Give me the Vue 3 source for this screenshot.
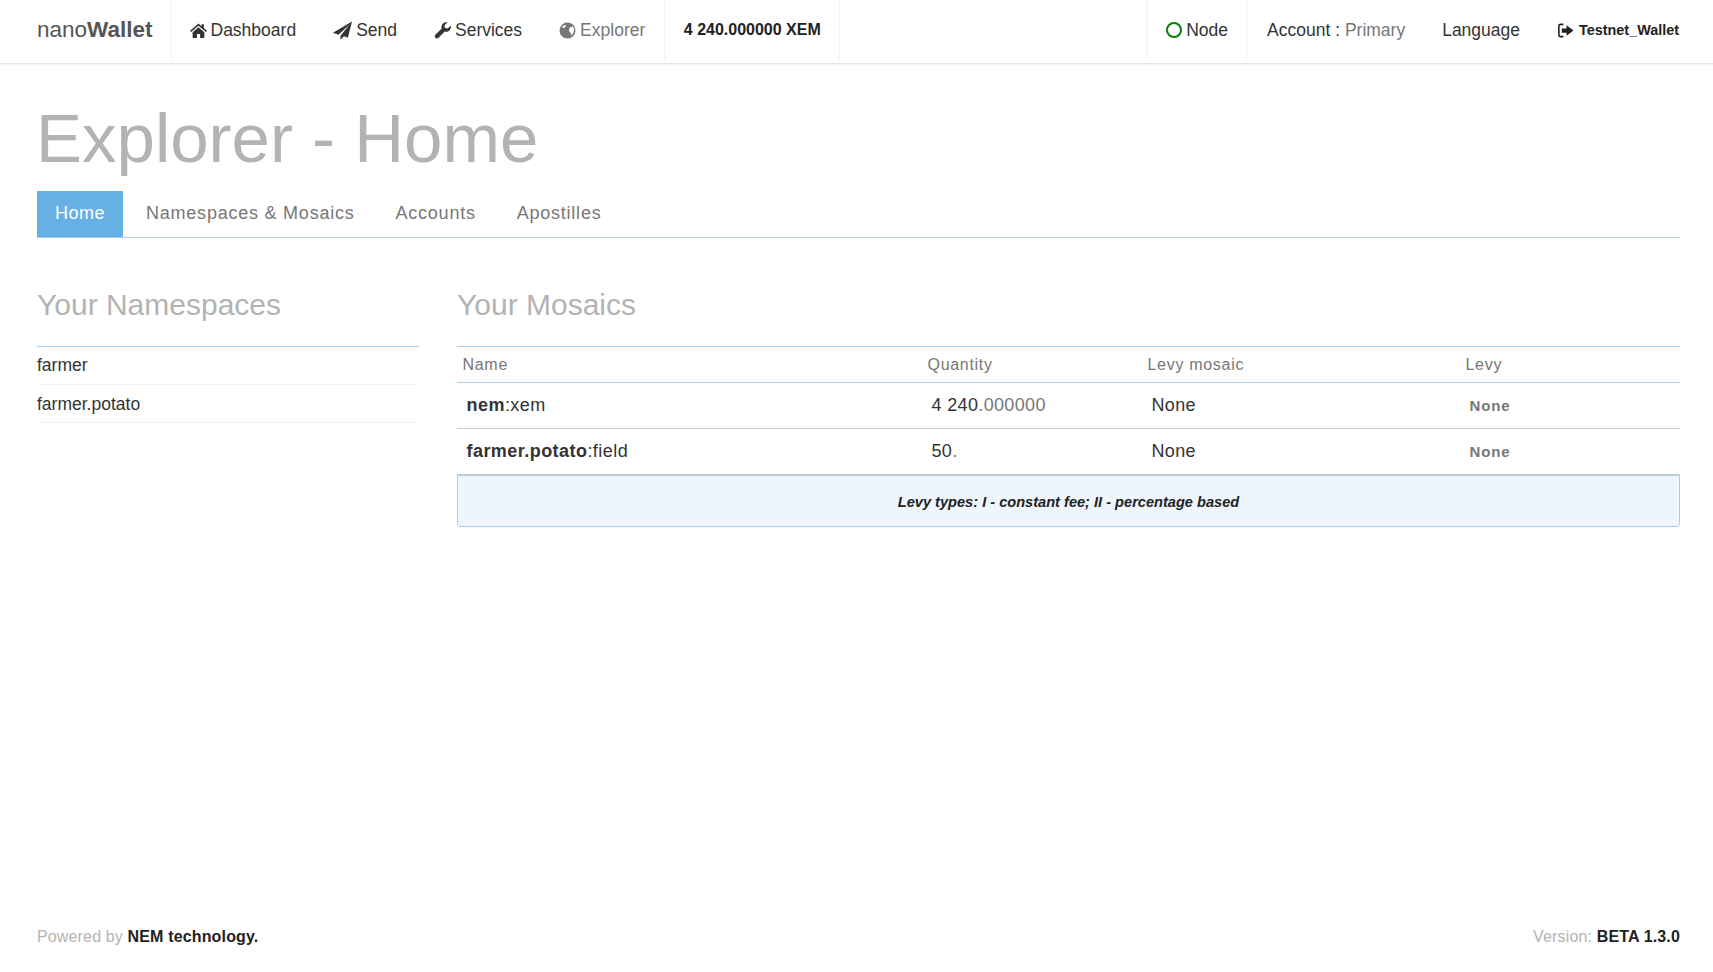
<template>
  <div class="page">
    <header class="navbar">
      <div class="brand">nano<b>Wallet</b></div>
      <nav class="nav-main">
        <a class="nav-link">
          <svg class="icon" viewBox="0 0 16 16"><path d="M8 1.500 0 8.200l1 1.200L8 3.600l7 5.800 1-1.200-3-2.500V2h-2.200v2.100L8 1.500Z" /><path d="M8 5 2.500 9.600V15h4v-3.800h3V15h4V9.600L8 5Z" /></svg>
          Dashboard
        </a>
        <a class="nav-link">
          <svg class="icon send" viewBox="0 0 16 16"><path d="M16 .5 0 9.800l4.600 1.700L14 3 6.300 12.400v3.300l2.900-2.800 3.300 1.300L16 .5Z" /></svg>
          Send
        </a>
        <a class="nav-link">
          <svg class="icon" viewBox="0 0 16 16"><path d="M15.900 3.500c.4 1.600-.1 3.200-1.300 4.400-1.300 1.200-3 1.600-4.600 1l-5.700 6c-.8.800-2.200.8-3 0s-.8-2.200 0-3l6-5.700c-.6-1.600-.2-3.300 1-4.600C9.500.4 11.100-.1 12.700.3L9.800 3.200l.5 2.500 2.500.5 3.100-2.700Z" /></svg>
          Services
        </a>
        <a class="nav-link muted">
          <svg class="icon" viewBox="0 0 16 16"><path fill-rule="evenodd" d="M8 .5a7.500 7.500 0 1 0 0 15 7.500 7.500 0 0 0 0-15ZM3.600 3.600 6 2.900l.4 1.600-1.800 1.200-1.600-.6.600-1.500ZM10.500 5l2.700-.7 1 2.700-.7 3.300-1.900 2.500-.6-2.600-1.700-1.700.4-2 .800-1.500Z" /></svg>
          Explorer
        </a>
        <div class="nav-balance">4 240.000000 XEM</div>
      </nav>
      <nav class="nav-right">
        <a class="nav-node"><span class="node-dot"></span>Node</a>
        <a class="nav-link wide account">Account : <span class="grey">Primary</span></a>
        <a class="nav-link wide">Language</a>
        <a class="nav-wallet">
          <svg class="icon" viewBox="0 0 16 16"><path d="M6 1.500H3.500A2.500 2.500 0 0 0 1 4v8a2.500 2.500 0 0 0 2.500 2.500H6V13H3.500a1 1 0 0 1-1-1V4a1 1 0 0 1 1-1H6V1.500Z" /><path d="M9 3l6.500 5L9 13v-3H4.500V6H9V3Z" /></svg>
          Testnet_Wallet
        </a>
      </nav>
    </header>

    <main class="content">
      <h1 class="title">Explorer - Home</h1>
      <ul class="tabs">
        <li v-for="(tab, i) in tabs" :key="tab" class="tab" :class="{ active: i === 0 }">{{ tab }}</li>
      </ul>

      <div class="columns">
        <section class="col-left">
          <h3 class="section-title">Your Namespaces</h3>
          <ul class="ns-list">
            <li v-for="ns in namespaces" :key="ns">{{ ns }}</li>
          </ul>
        </section>
        <section class="col-right">
          <h3 class="section-title">Your Mosaics</h3>
          <table class="mosaics">
            <thead>
              <tr>
                <th class="c-name">Name</th>
                <th class="c-qty">Quantity</th>
                <th class="c-mosaic">Levy mosaic</th>
                <th>Levy</th>
              </tr>
            </thead>
            <tbody>
              <tr v-for="m in mosaics" :key="m.ns">
                <td class="name"><b>{{ m.ns }}</b>:{{ m.name }}</td>
                <td>{{ m.whole }}<span class="grey">{{ m.frac }}</span></td>
                <td>None</td>
                <td class="levy">None</td>
              </tr>
            </tbody>
          </table>
          <div class="note">Levy types: I - constant fee; II - percentage based</div>
        </section>
      </div>
    </main>

    <footer class="footer">
      <div>Powered by <b>NEM technology.</b></div>
      <div>Version: <b>BETA 1.3.0</b></div>
    </footer>
  </div>
</template>

<script setup>
const tabs = ['Home', 'Namespaces & Mosaics', 'Accounts', 'Apostilles']
const namespaces = ['farmer', 'farmer.potato']
const mosaics = [
  { ns: 'nem', name: 'xem', whole: '4 240', frac: '.000000' },
  { ns: 'farmer.potato', name: 'field', whole: '50', frac: '.' },
]
</script>

<style>
html,
body {
  margin: 0;
  background: #fff;
}
</style>

<style scoped>
.page {
  min-height: 972px;
  box-sizing: border-box;
  display: flex;
  flex-direction: column;
  font-family: 'Liberation Sans', Arial, sans-serif;
  font-size: 18px;
  color: #333;
}

.navbar {
  height: 63px;
  display: flex;
  justify-content: space-between;
  border-bottom: 1px solid #e7e7e7;
  box-shadow: 0 1px 1px rgba(0, 0, 0, 0.04);
  padding: 0 34px 0 37px;
}

.brand {
  width: 134px;
  line-height: 60px;
  font-size: 22.500px;
  color: #555;
}

.nav-main,
.nav-right {
  display: flex;
  align-items: stretch;
}

.nav-main {
  flex: 1;
  border-left: 1px solid #f2f2f2;
}

.nav-link {
  display: flex;
  align-items: center;
  gap: 4px;
  padding: 0 18.500px;
  height: 60px;
  font-size: 17.500px;
  color: #333;
  white-space: nowrap;
}

.nav-main .nav-link:first-child {
  padding-left: 17.500px;
}

.nav-link.muted {
  color: #777;
}

.nav-link.wide {
  white-space: pre;
  gap: 0;
}

.nav-link.account {
  padding-left: 20px;
}

.icon {
  width: 17px;
  height: 17px;
  fill: currentColor;
  flex: none;
}

.icon.send {
  width: 19px;
  height: 19px;
}

.nav-balance {
  display: flex;
  align-items: center;
  height: 60px;
  padding: 0 18px 0 19px;
  font-size: 16px;
  font-weight: 700;
  color: #222;
  border-left: 1px solid #f2f2f2;
  border-right: 1px solid #f2f2f2;
}

.nav-node {
  display: flex;
  align-items: center;
  gap: 4px;
  height: 60px;
  padding: 0 18px 0 19.500px;
  font-size: 17.500px;
  border-left: 1px solid #f2f2f2;
  border-right: 1px solid #f2f2f2;
}

.node-dot {
  width: 16px;
  height: 16px;
  box-sizing: border-box;
  border: 2px solid #0a7d0a;
  border-radius: 50%;
}

.nav-wallet {
  display: flex;
  align-items: center;
  gap: 5px;
  height: 60px;
  padding-left: 18.500px;
  font-size: 14.400px;
  font-weight: 700;
  color: #222;
}

.grey {
  color: #777;
}

.content {
  padding: 0 33px 0 37px;
}

.title {
  margin: 35px 0 0 -1px;
  font-size: 69px;
  line-height: 79px;
  font-weight: 400;
  color: #b3b3b3;
}

.tabs {
  display: flex;
  list-style: none;
  margin: 13px 0 0;
  padding: 0;
  border-bottom: 1px solid #a9cfe6;
}

.tab {
  height: 46px;
  line-height: 45px;
  padding: 0 18px;
  margin-right: 5px;
  letter-spacing: 0.77px;
  color: #777;
}

.tab.active {
  letter-spacing: 0.5px;
  background: #67b0e6;
  color: #fff;
}

.columns {
  display: flex;
  gap: 38px;
}

.col-left {
  width: 382px;
  flex: none;
}

.col-right {
  flex: 1;
  min-width: 0;
}

.section-title {
  margin: 0;
  padding: 48px 0 22px;
  font-size: 30px;
  line-height: 38px;
  font-weight: 400;
  color: #b3b3b3;
}

.ns-list {
  list-style: none;
  margin: 0;
  padding: 0;
  border-top: 1px solid #a3d1f2;
  font-size: 17.500px;
}

.ns-list li {
  height: 36.500px;
  line-height: 36px;
  margin-bottom: 1px;
  border-bottom: 1px solid #f2f2f2;
  border-radius: 0 0 3px 3px;
}

.mosaics {
  width: 100%;
  border-collapse: collapse;
  table-layout: fixed;
  border-top: 1px solid #a3d1f2;
}

.mosaics th {
  height: 35px;
  padding: 0 5.500px;
  text-align: left;
  font-size: 16px;
  font-weight: 400;
  letter-spacing: 0.7px;
  color: #777;
  border-bottom: 1px solid #a3d1f2;
}

.mosaics td {
  height: 45px;
  padding: 0 9.500px;
  letter-spacing: 0.35px;
  border-bottom: 1px solid #ccc;
}

.mosaics td.name {
  letter-spacing: 0.45px;
}

.c-name {
  width: 454px;
}

.c-qty {
  width: 209px;
}

.c-mosaic {
  width: 307px;
}

.mosaics td.levy {
  font-size: 15px;
  font-weight: 700;
  letter-spacing: 0.9px;
  color: #777;
}

.note {
  height: 52px;
  box-sizing: border-box;
  line-height: 52px;
  text-align: center;
  font-size: 14.600px;
  font-weight: 700;
  font-style: italic;
  color: #222;
  background: #eef5fc;
  border: 1px solid #a3d1f2;
  border-radius: 0 0 3px 3px;
}

.footer {
  margin-top: auto;
  display: flex;
  justify-content: space-between;
  padding: 0 33px 26px 37px;
  font-size: 16px;
  letter-spacing: 0.15px;
  color: #b3b3b3;
}

.footer b {
  color: #222;
}
</style>
